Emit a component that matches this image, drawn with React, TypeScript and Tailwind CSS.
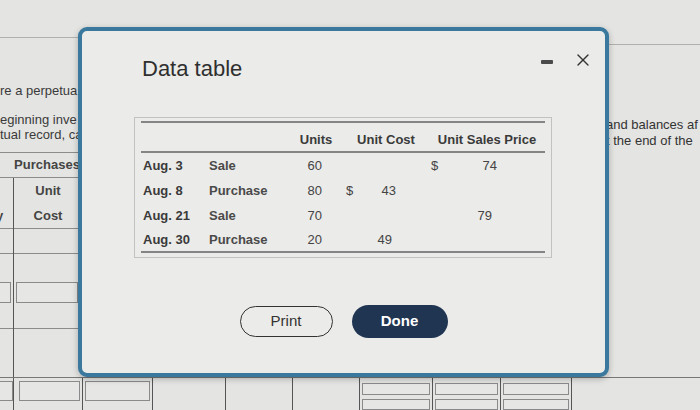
import { X } from "lucide-react";

type Row = {
  date: string;
  kind: string;
  units: string;
  costSign?: boolean;
  cost?: string;
  costPad: string;
  priceSign?: boolean;
  price?: string;
  pricePad: string;
};

const rows: Row[] = [
  { date: "Aug. 3", kind: "Sale", units: "60", costPad: "pr-[2px]", priceSign: true, price: "74", pricePad: "pr-[3px]" },
  { date: "Aug. 8", kind: "Purchase", units: "80", costSign: true, cost: "43", costPad: "pr-[2px]", pricePad: "pr-[3px]" },
  { date: "Aug. 21", kind: "Sale", units: "70", costPad: "pr-[2px]", price: "79", pricePad: "pr-[8px]" },
  { date: "Aug. 30", kind: "Purchase", units: "20", cost: "49", costPad: "pr-[6px]", pricePad: "pr-[3px]" },
];

function InputBox({ className }: { className: string }) {
  return <div className={"border border-[#8a8a8a] bg-[#e6e6e4] " + className} />;
}

function DataTable() {
  return (
    <div className="ml-[52px] mt-[34px] w-[418px] h-[141px] border border-[#c2c2c0] px-[6px] pt-[3px]">
      <div className="border-t-2 border-[#858585]">
        <div className="flex h-[30px] items-end pb-[2px] border-b-2 border-[#858585] text-[13px] font-bold text-[#3a3a3a]">
          <div className="w-[152px]" />
          <div className="w-[46px] text-center">Units</div>
          <div className="w-[94px] text-center">Unit Cost</div>
          <div className="w-[108px] text-center">Unit Sales Price</div>
        </div>
        {rows.map((r, i) => (
          <div
            key={r.date}
            className={
              "flex h-[25px] items-center text-[13px] text-[#444] pl-[2px] " +
              (i === rows.length - 1 ? "border-b-2 border-[#858585]" : "")
            }
          >
            <div className="w-[66px] font-bold text-[#3a3a3a]">{r.date}</div>
            <div className="w-[81px] font-bold text-[#4a4a4a]">{r.kind}</div>
            <div className="w-[32px] text-right">{r.units}</div>
            <div className="w-[38px] pl-[24px]">{r.costSign ? "$" : ""}</div>
            <div className={"w-[38px] text-right " + r.costPad}>{r.cost ?? ""}</div>
            <div className="w-[50px] pl-[33px]">{r.priceSign ? "$" : ""}</div>
            <div className={"w-[52px] text-right " + r.pricePad}>{r.price ?? ""}</div>
          </div>
        ))}
      </div>
    </div>
  );
}

export default function App() {
  return (
    <div
      className="relative w-[700px] h-[410px] overflow-hidden bg-[#e4e4e2] text-[#333]"
      style={{ fontFamily: '"Liberation Sans", Arial, sans-serif' }}
    >
      <div className="flex h-[377px]">
        {/* left strip of the page behind */}
        <div className="w-[82px] shrink-0 flex flex-col overflow-hidden">
          <div className="h-[38px] border-b border-[#b0b0ae] shrink-0" />
          <div className="pt-[45px] text-[13px] text-[#3a3a3a] whitespace-nowrap leading-[15px]">
            <div>re a perpetua</div>
            <div className="mt-[14px]">eginning inve</div>
            <div>tual record, ca</div>
          </div>
          <div className="mt-[10px] border-t border-[#8c8c8c] h-[25px] shrink-0 flex items-center justify-center text-[13px] font-bold text-[#444] pl-[12px]">
            Purchases
          </div>
          <div className="flex flex-1 border-t border-[#8c8c8c]">
            <div className="w-[14px] border-r border-[#555] flex flex-col">
              <div className="h-[51px] border-b border-[#8c8c8c] flex items-end pb-[3px] text-[13px] font-bold text-[#444] overflow-hidden">
                <span className="-ml-[4px]">y</span>
              </div>
              <div className="h-[25px] border-b border-[#8c8c8c]" />
              <div className="h-[75px] border-b border-[#8c8c8c] pt-[28px]">
                <InputBox className="h-[21px] w-[11px] border-l-0" />
              </div>
            </div>
            <div className="flex-1 flex flex-col">
              <div className="h-[51px] border-b border-[#8c8c8c] flex flex-col items-center justify-center text-[13px] font-bold text-[#444] leading-[25px]">
                <div>Unit</div>
                <div>Cost</div>
              </div>
              <div className="h-[25px] border-b border-[#8c8c8c]" />
              <div className="h-[75px] border-b border-[#8c8c8c] pt-[28px] px-[2px]">
                <InputBox className="h-[21px] w-[62px]" />
              </div>
            </div>
          </div>
        </div>

        <div className="flex-1" />

        {/* right strip of the page behind */}
        <div className="w-[97px] shrink-0 flex flex-col overflow-hidden">
          <div className="h-[45px] border-b border-[#b0b0ae] shrink-0" />
          <div className="pt-[72px] text-[13px] text-[#333] whitespace-nowrap leading-[16px] ml-[3px]">
            <div>and balances af</div>
            <div>t the end of the</div>
          </div>
        </div>
      </div>

      {/* bottom row of the page behind */}
      <div className="flex h-[33px] border-t border-[#777]">
        <div className="w-[14px] border-r border-[#555] pt-[3px]">
          <InputBox className="h-[20px] w-[13px] border-l-0" />
        </div>
        <div className="w-[69px] border-r border-[#555] pt-[3px] pl-[5px]">
          <InputBox className="h-[20px] w-[61px]" />
        </div>
        <div className="w-[70px] border-r border-[#555] pt-[3px] pl-[2px]">
          <InputBox className="h-[20px] w-[65px]" />
        </div>
        <div className="w-[73px] border-r border-[#555]" />
        <div className="w-[67px] border-r border-[#555]" />
        <div className="w-[67px] border-r border-[#555]" />
        {[73, 68, 71].map((w) => (
          <div key={w} className="border-r border-[#555] pt-[5px] px-[2px] flex flex-col gap-[4px]" style={{ width: w }}>
            <InputBox className="h-[20px] w-full" />
            <InputBox className="h-[20px] w-full" />
          </div>
        ))}
      </div>

      {/* dialog */}
      <div className="absolute left-[78px] top-[27px] w-[531px] h-[350px] rounded-[9px] border-4 border-[#3a789e] bg-[#ebebe9] shadow-[0_2px_6px_rgba(0,0,0,0.25)] flex flex-col">
        <div className="flex justify-between items-start pt-[24px] pr-[12px]">
          <div className="pl-[60px] text-[22px] leading-[28px] text-[#2f2f2f]">Data table</div>
          <div className="flex items-center gap-[20px] -mt-[5px]">
            <div className="w-[12px] h-[4px] bg-[#4a4a4a] rounded-[1px] mt-[3px]" />
            <X size={20} strokeWidth={1.6} className="text-[#333]" />
          </div>
        </div>
        <DataTable />
        <div className="mt-[47px] flex justify-center items-center gap-[19px]">
          <button className="w-[93px] h-[31px] rounded-full border-[1.5px] border-[#333] text-[15px] text-[#333]">
            Print
          </button>
          <button className="w-[96px] h-[33px] rounded-full bg-[#1f3552] text-[15px] font-semibold text-white">
            Done
          </button>
        </div>
      </div>
    </div>
  );
}
